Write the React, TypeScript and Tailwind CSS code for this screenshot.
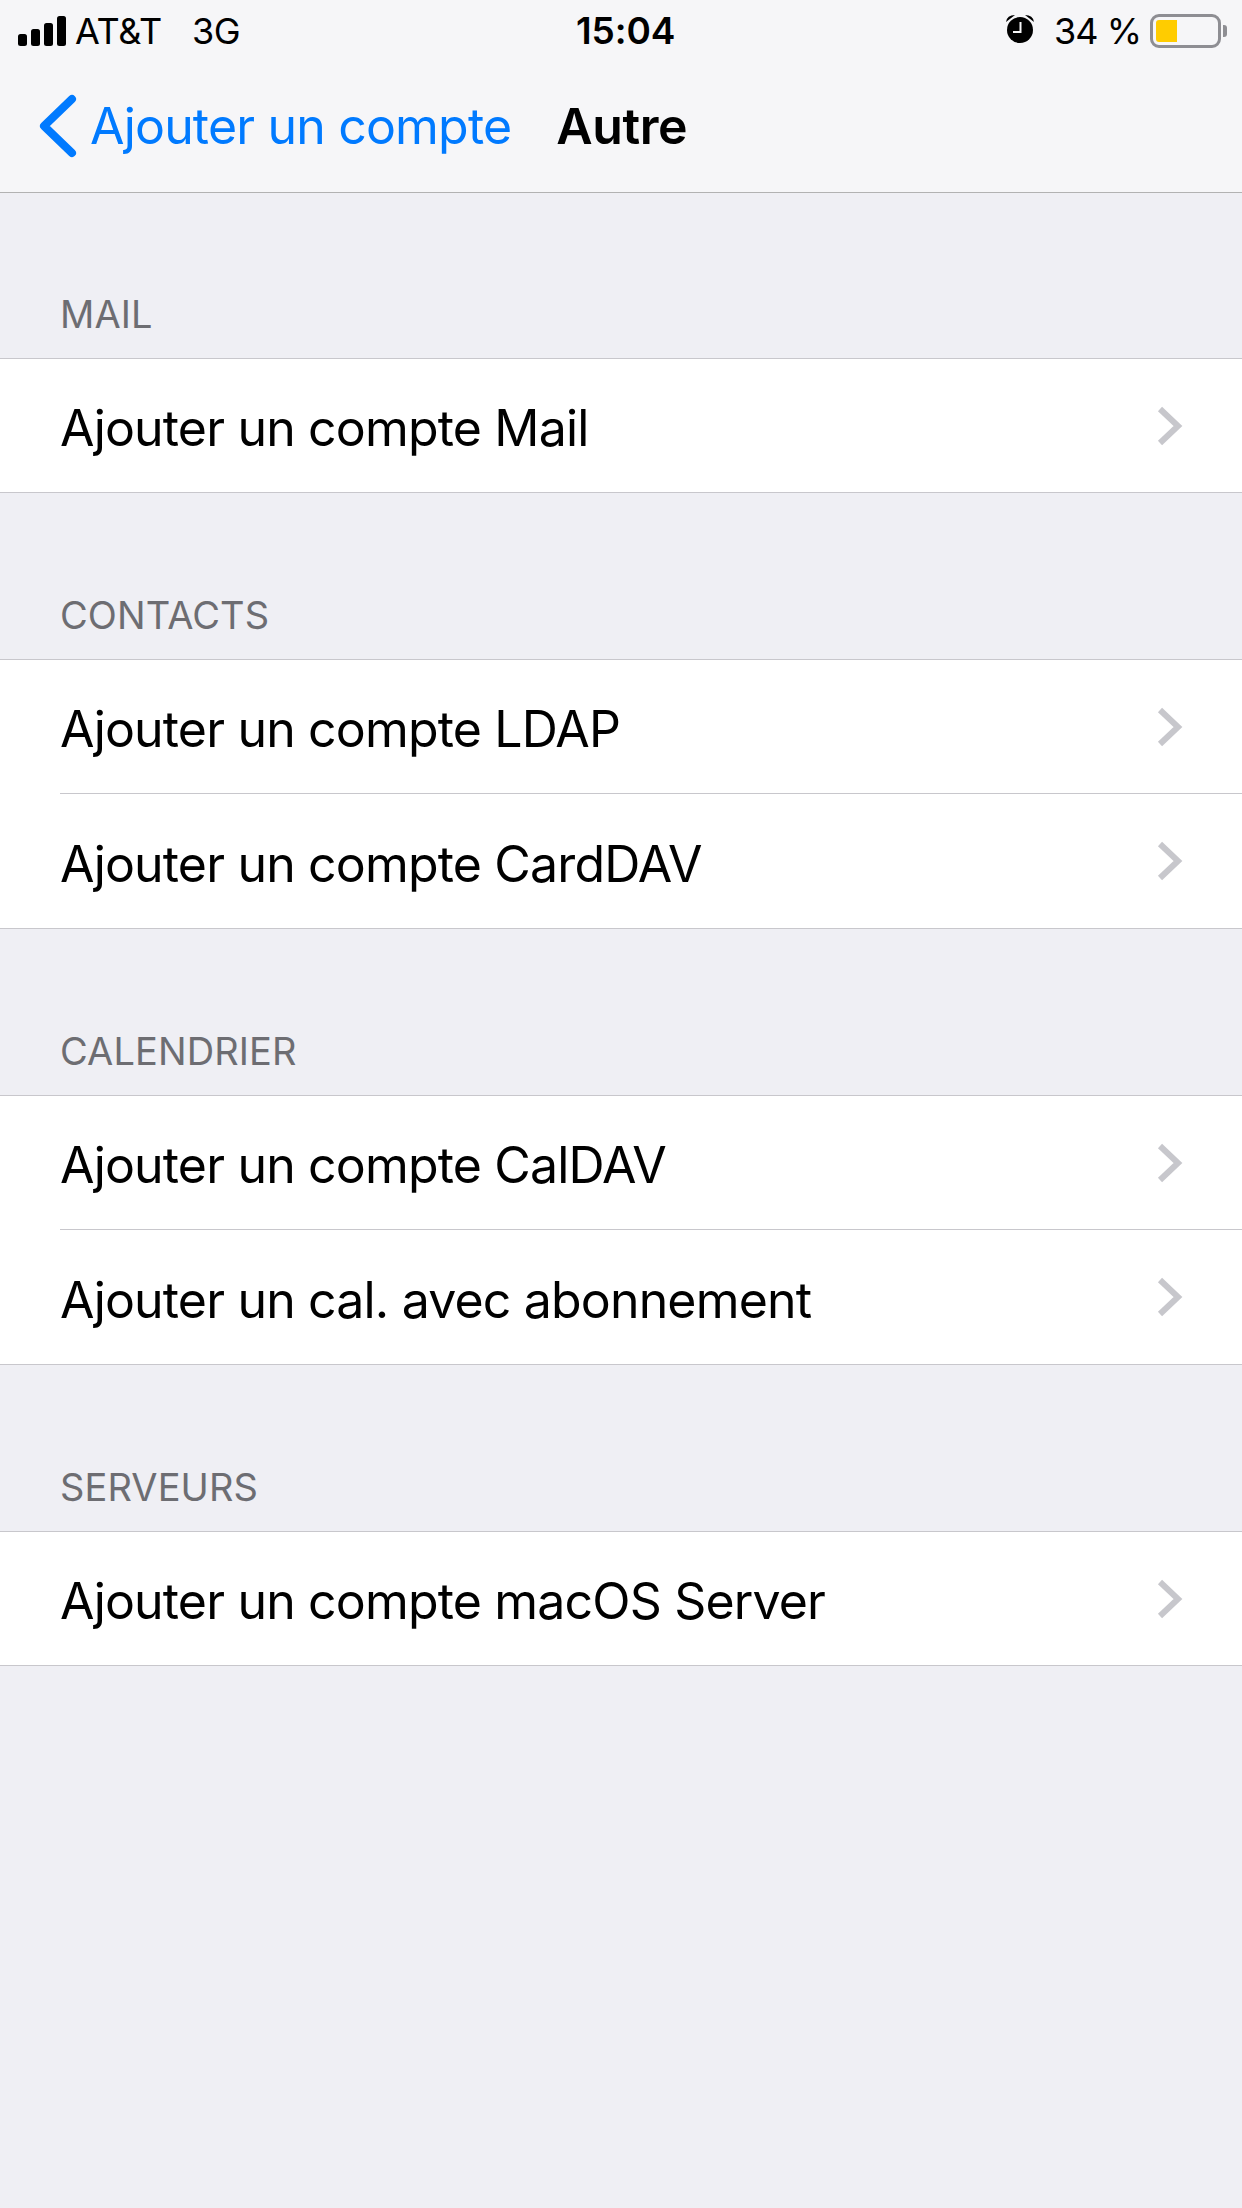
const FONT = "font-['Inter','Liberation_Sans',sans-serif]";

function Chevron() {
  return (
    <svg width="28" height="42" viewBox="0 0 28 42" fill="none" className="shrink-0">
      <path d="M4 4 L22 21 L4 38" stroke="#c7c7cc" strokeWidth="6" strokeLinecap="butt" strokeLinejoin="miter" />
    </svg>
  );
}

function Row({ label, last, solo }: { label: string; last?: boolean; solo?: boolean }) {
  const box = last ? (solo ? "h-[133px]" : "h-[134px]") : "h-[134px] border-b border-[#c8c7cc]";
  return (
    <div className="pl-[60px]">
      <div className={`flex items-center pr-[58px] ${box}`}>
        <span className="flex-1 pt-[5px] text-[50px] leading-none tracking-[-0.83px] text-black">{label}</span>
        <Chevron />
      </div>
    </div>
  );
}

function Section({ title, rows, first }: { title: string; rows: string[]; first?: boolean }) {
  return (
    <section>
      <div className={`flex items-end pl-[60px] pb-[22px] ${first ? "h-[165px]" : "h-[166px]"}`}>
        <h2 className="text-[38px] leading-[44px] tracking-[0.1px] text-[#6d6d72]">{title}</h2>
      </div>
      <div className="bg-white border-y border-[#c8c7cc]">
        {rows.map((r, i) => (
          <Row key={r} label={r} last={i === rows.length - 1} solo={rows.length === 1} />
        ))}
      </div>
    </section>
  );
}

export default function App() {
  return (
    <div className={`w-[1242px] h-[2208px] bg-[#efeff4] overflow-hidden ${FONT}`}>
      <header className="h-[193px] bg-[#f6f6f8] border-b border-[#b2b2b2]">
        <div className="h-[62px] flex items-center text-[36px] text-black">
          <div className="w-[576px] pl-[18px] flex items-center">
            <svg width="48" height="30" viewBox="0 0 48 30" className="mr-[9px]" fill="#000">
              <rect x="0" y="18" width="9" height="12" rx="2.5" />
              <rect x="13" y="13" width="9" height="17" rx="2.5" />
              <rect x="26" y="7" width="9" height="23" rx="2.5" />
              <rect x="39" y="0" width="9" height="30" rx="2.5" />
            </svg>
            <span className="tracking-[-0.3px]">AT&amp;T</span>
            <span className="ml-[30px] tracking-[-0.6px]">3G</span>
          </div>
          <span className="text-[37px] font-semibold tracking-[-0.1px]">15:04</span>
          <div className="ml-auto pr-[15px] flex items-center">
            <svg width="30" height="32" viewBox="0 0 30 32" className="mr-[19px]">
              <circle cx="15" cy="15" r="13" fill="#000" />
              <path d="M1 7 Q2 0 10 0 Z M29 7 Q28 0 20 0 Z" fill="#000" />
              <path d="M15.5 7 V17 H8" stroke="#f6f6f8" strokeWidth="2" fill="none" />
            </svg>
            <span className="tracking-[-1px]">34 %</span>
            <div className="ml-[9px] w-[71px] h-[34px] rounded-[9px] border-[3px] border-[#8e8e93] p-[3px]">
              <div className="w-[21px] h-full rounded-l-[3px] bg-[#ffcc00]" />
            </div>
            <div className="ml-[2px] w-[4px] h-[12px] rounded-r-[3px] bg-[#8e8e93]" />
          </div>
        </div>
        <div className="h-[130px] pb-[2px] flex items-center pl-[39px]">
          <svg width="38" height="64" viewBox="0 0 38 64" fill="none">
            <path d="M33 5 L5 32 L33 59" stroke="#007aff" strokeWidth="8" strokeLinecap="round" strokeLinejoin="round" />
          </svg>
          <span className="ml-[13px] text-[50px] leading-none tracking-[-0.82px] text-[#007aff]">Ajouter un compte</span>
          <span className="ml-[45px] text-[50px] leading-none font-semibold tracking-[-0.4px] text-black">Autre</span>
        </div>
      </header>
      <Section first title="MAIL" rows={["Ajouter un compte Mail"]} />
      <Section title="CONTACTS" rows={["Ajouter un compte LDAP", "Ajouter un compte CardDAV"]} />
      <Section title="CALENDRIER" rows={["Ajouter un compte CalDAV", "Ajouter un cal. avec abonnement"]} />
      <Section title="SERVEURS" rows={["Ajouter un compte macOS Server"]} />
    </div>
  );
}
